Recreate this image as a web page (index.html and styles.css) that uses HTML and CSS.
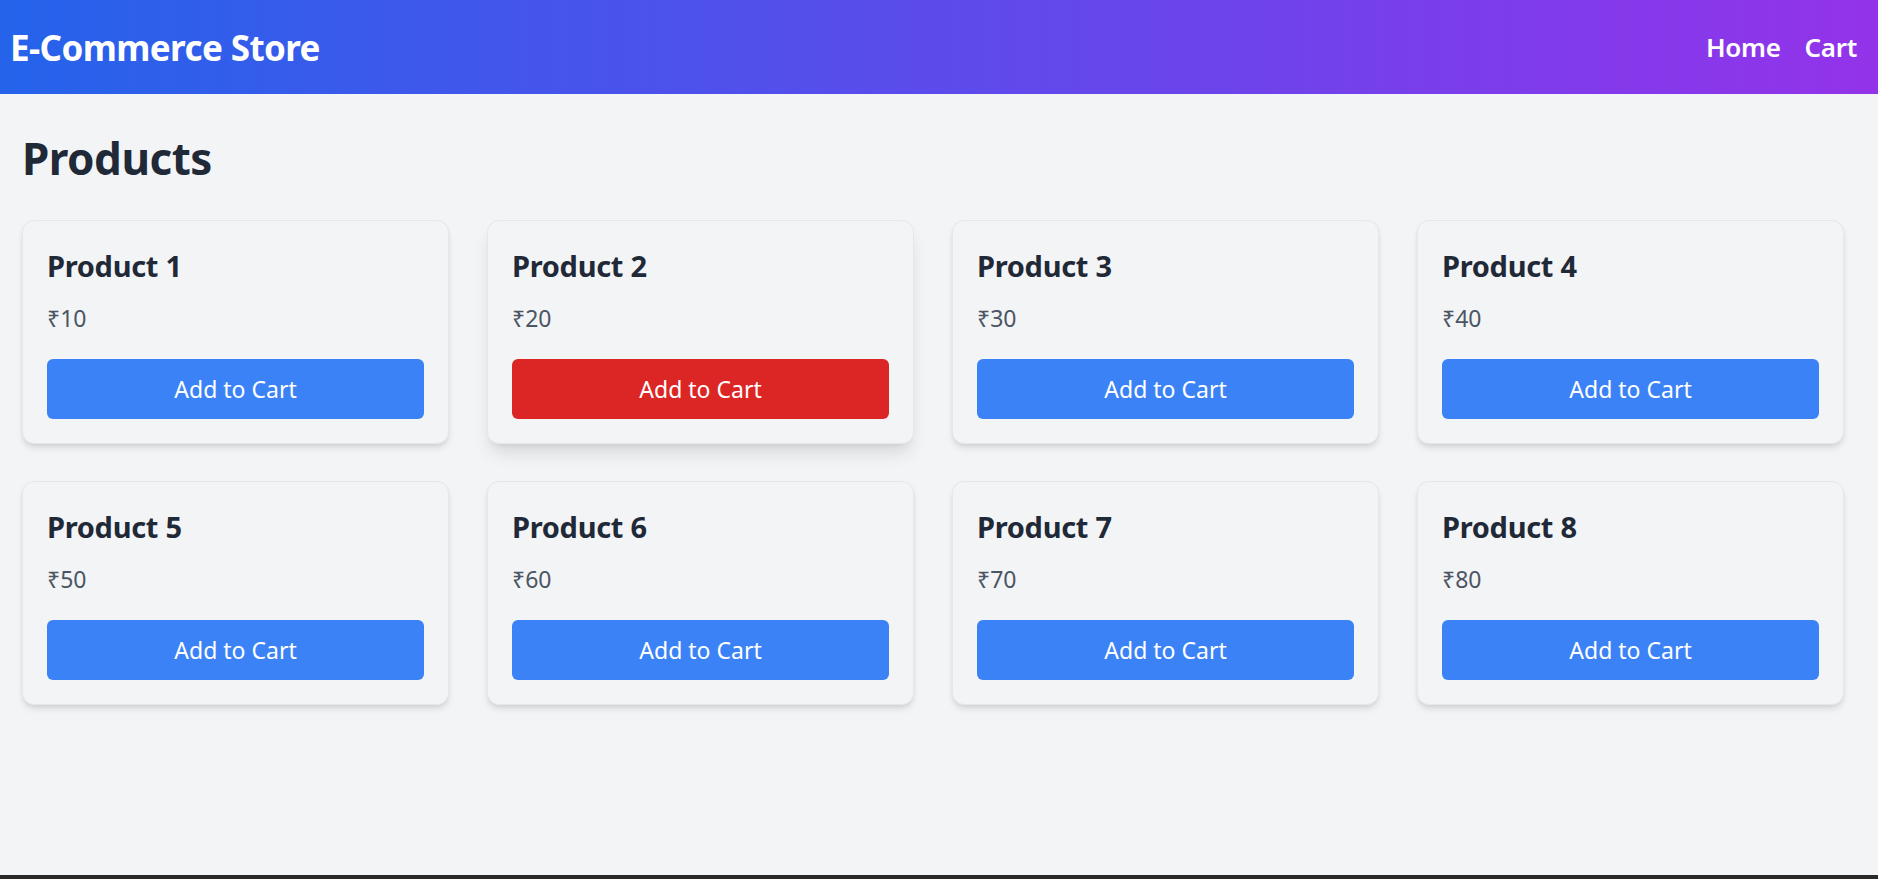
FILE: index.html
```html
<!DOCTYPE html>
<html lang="en">
<head>
<meta charset="utf-8">
<title>E-Commerce Store</title>
<link rel="stylesheet" href="styles.css">
</head>
<body>
<header class="navbar">
  <div class="logo">E-Commerce Store</div>
  <nav class="nav-links">
    <a href="#">Home</a>
    <a href="#">Cart</a>
  </nav>
</header>
<main class="main">
  <h1 class="page-title">Products</h1>
  <div class="grid">
    <div class="card"><h2 class="card-title">Product 1</h2><p class="price">₹10</p><button class="btn">Add to Cart</button></div>
    <div class="card card-hover"><h2 class="card-title">Product 2</h2><p class="price">₹20</p><button class="btn btn-hover">Add to Cart</button></div>
    <div class="card"><h2 class="card-title">Product 3</h2><p class="price">₹30</p><button class="btn">Add to Cart</button></div>
    <div class="card"><h2 class="card-title">Product 4</h2><p class="price">₹40</p><button class="btn">Add to Cart</button></div>
    <div class="card"><h2 class="card-title">Product 5</h2><p class="price">₹50</p><button class="btn">Add to Cart</button></div>
    <div class="card"><h2 class="card-title">Product 6</h2><p class="price">₹60</p><button class="btn">Add to Cart</button></div>
    <div class="card"><h2 class="card-title">Product 7</h2><p class="price">₹70</p><button class="btn">Add to Cart</button></div>
    <div class="card"><h2 class="card-title">Product 8</h2><p class="price">₹80</p><button class="btn">Add to Cart</button></div>
  </div>
</main>
</body>
</html>
```
FILE: styles.css
```css
* { box-sizing: border-box; }
html { background: #2b2927; }
body {
  margin: 0;
  height: 875px;
  overflow: hidden;
  background: #f3f4f6;
  font-family: "Noto Sans", "Open Sans", sans-serif;
  color: #1f2937;
}
.navbar {
  height: 94px;
  display: flex;
  align-items: center;
  justify-content: space-between;
  padding: 0 21px 0 10px;
  background: linear-gradient(90deg, #2563eb 0%, #9333ea 100%);
  color: #fff;
}
.logo {
  font-size: 35px;
  font-weight: 700;
  letter-spacing: -0.6px;
}
.nav-links {
  display: flex;
  gap: 24px;
}
.nav-links a {
  color: #fff;
  text-decoration: none;
  font-size: 26px;
  font-weight: 600;
  letter-spacing: -0.3px;
}
.main {
  padding: 34px 34px 0 22px;
}
.page-title {
  margin: 0 0 31px;
  font-size: 44px;
  line-height: 61px;
  font-weight: 700;
  letter-spacing: -0.5px;
  color: #1f2937;
}
.grid {
  display: grid;
  grid-template-columns: repeat(4, 1fr);
  column-gap: 38px;
  row-gap: 37px;
}
.card {
  background: #f3f4f6;
  border: 1px solid #e5e7eb;
  border-radius: 12px;
  padding: 24px;
  box-shadow: 0 5px 7px -1px rgba(0,0,0,0.1), 0 2px 5px -2px rgba(0,0,0,0.1);
}
.card-hover {
  box-shadow: 0 12px 18px -4px rgba(0,0,0,0.12), 0 5px 7px -5px rgba(0,0,0,0.1);
}
.card-title {
  margin: 0;
  font-size: 29px;
  line-height: 41px;
  font-weight: 700;
  letter-spacing: -0.3px;
  color: #1f2937;
}
.price {
  margin: 16px 0 25px;
  font-size: 23px;
  line-height: 32px;
  color: #4b5563;
}
.btn {
  display: block;
  width: 100%;
  height: 60px;
  border: none;
  border-radius: 6px;
  background: #3b82f6;
  color: #fff;
  font-family: inherit;
  font-size: 23px;
  cursor: pointer;
}
.btn-hover {
  background: #dc2626;
}
```
